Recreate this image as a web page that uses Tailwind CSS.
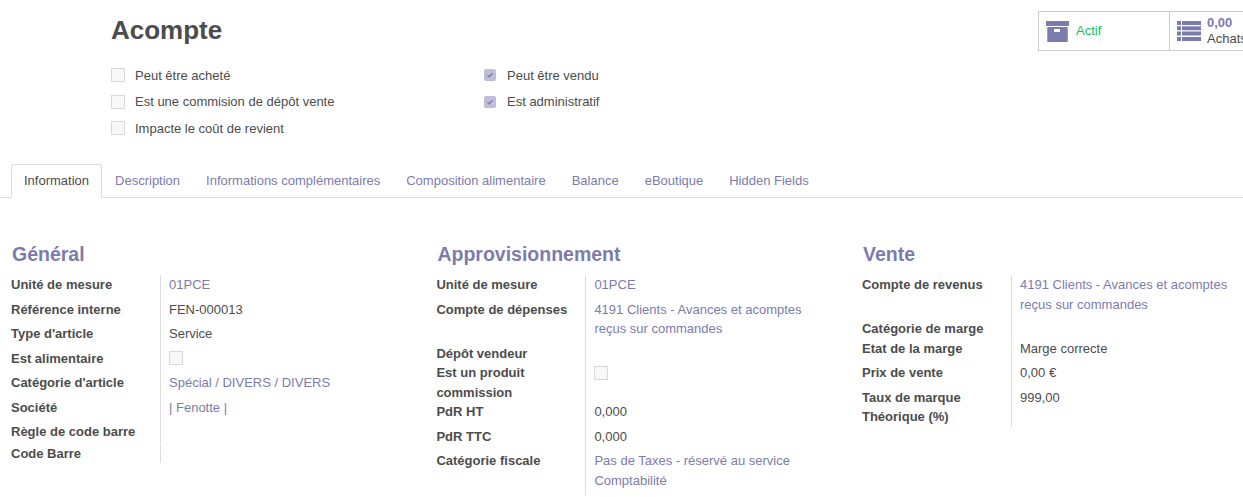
<!DOCTYPE html>
<html lang="fr">
  <head>
    <meta charset="UTF-8" />
    <title>Acompte</title>
    <script src="https://cdn.jsdelivr.net/npm/@tailwindcss/browser@4"></script>
  </head>
  <body class="bg-white h-[497px] w-[1243px] overflow-hidden font-['Liberation_Sans',Arial,sans-serif] text-[13px] leading-[19.5px] text-[#4c4c4c]">
    <!-- Header -->
    <div class="flex justify-between h-[164px]">
      <div class="pl-[111px] pt-[13px]">
        <h1 class="text-[26px] font-bold leading-[34px] text-[#4c4c4c]">Acompte</h1>
        <div class="flex mt-[15px]">
          <div class="w-[373px] flex flex-col">
            <div class="flex items-center h-[26.5px]">
              <span class="w-[14px] h-[14px] border border-[#d9d9d9] bg-[#f8f8f8] mr-[10px]"></span>
              <span>Peut être acheté</span>
            </div>
            <div class="flex items-center h-[26.5px]">
              <span class="w-[14px] h-[14px] border border-[#d9d9d9] bg-[#f8f8f8] mr-[10px]"></span>
              <span>Est une commision de dépôt vente</span>
            </div>
            <div class="flex items-center h-[26.5px]">
              <span class="w-[14px] h-[14px] border border-[#d9d9d9] bg-[#f8f8f8] mr-[10px]"></span>
              <span>Impacte le coût de revient</span>
            </div>
          </div>
          <div class="flex flex-col">
            <div class="flex items-center h-[26.5px]">
              <span class="w-[12px] h-[12px] rounded-[2px] bg-[#bfbdd9] mr-[11px] flex items-center justify-center">
                <svg width="8" height="8" viewBox="0 0 8 8"><path d="M1.5 4.2 3.2 5.8 6.5 2.2" fill="none" stroke="#7c7bad" stroke-width="1.3" /></svg>
              </span>
              <span>Peut être vendu</span>
            </div>
            <div class="flex items-center h-[26.5px]">
              <span class="w-[12px] h-[12px] rounded-[2px] bg-[#bfbdd9] mr-[11px] flex items-center justify-center">
                <svg width="8" height="8" viewBox="0 0 8 8"><path d="M1.5 4.2 3.2 5.8 6.5 2.2" fill="none" stroke="#7c7bad" stroke-width="1.3" /></svg>
              </span>
              <span>Est administratif</span>
            </div>
          </div>
        </div>
      </div>
      <div class="mt-[11px] h-[40px] w-[205px] border border-r-0 border-[#cccccc] flex overflow-hidden shrink-0">
        <div class="w-[131px] shrink-0 border-r border-[#cccccc] flex items-center pl-[7px]">
          <svg width="23" height="21" viewBox="0 0 23 21" class="mr-[7px] shrink-0">
            <path fill="#7c7bad" fill-rule="evenodd" d="M0 0h23v5H0zM1.300 6H21.700V21H1.300zM8 8v3h6V8z" />
          </svg>
          <span class="text-[#20bb5c]">Actif</span>
        </div>
        <div class="flex items-center pl-[7px] whitespace-nowrap">
          <svg width="24" height="20" viewBox="0 0 24 20" class="mr-[6px] shrink-0">
            <path fill="#7c7bad" d="M0 0h4v4H0zM5 0h19v4H5zM0 5.300h4v4H0zM5 5.300h19v4H5zM0 10.600h4v4H0zM5 10.600h19v4H5zM0 16h4v4H0zM5 16h19v4H5z" />
          </svg>
          <div class="leading-[16px]">
            <div class="font-bold text-[#7c7bad]">0,00</div>
            <div>Achats</div>
          </div>
        </div>
      </div>
    </div>

    <!-- Tabs -->
    <div class="flex h-[34px] pl-[11px] border-b border-[#dddddd]">
      <a class="h-[34px] px-[12px] pb-[2px] flex items-center border border-b-0 border-[#dddddd] rounded-t-[3px] bg-white">Information</a>
      <a class="h-[33px] px-[13px] flex items-center text-[#7c7bad]">Description</a>
      <a class="h-[33px] px-[13px] flex items-center text-[#7c7bad]">Informations complémentaires</a>
      <a class="h-[33px] px-[13px] flex items-center text-[#7c7bad]">Composition alimentaire</a>
      <a class="h-[33px] px-[13px] flex items-center text-[#7c7bad]">Balance</a>
      <a class="h-[33px] px-[13px] flex items-center text-[#7c7bad]">eBoutique</a>
      <a class="h-[33px] px-[13px] flex items-center text-[#7c7bad]">Hidden Fields</a>
    </div>

    <!-- Groups -->
    <div class="flex pl-[11px] pt-[42px]">
      <!-- Général -->
      <div class="w-[425.4px] shrink-0">
        <h2 class="text-[19.5px] font-bold leading-[28px] text-[#7c7bad] pl-[1px] mb-[7.2px]">Général</h2>
        <div class="flex"><div class="w-[149px] font-bold pb-[5px]">Unité de mesure</div><div class="w-[255px] border-l border-[#dddddd] pl-[8px] pb-[5px] text-[#7c7bad]">01PCE</div></div>
        <div class="flex"><div class="w-[149px] font-bold pb-[5px]">Référence interne</div><div class="w-[255px] border-l border-[#dddddd] pl-[8px] pb-[5px]">FEN-000013</div></div>
        <div class="flex"><div class="w-[149px] font-bold pb-[5px]">Type d'article</div><div class="w-[255px] border-l border-[#dddddd] pl-[8px] pb-[5px]">Service</div></div>
        <div class="flex"><div class="w-[149px] font-bold pb-[5px]">Est alimentaire</div><div class="w-[255px] border-l border-[#dddddd] pl-[8px] pb-[5px]"><span class="block w-[14px] h-[14px] mt-[2px] border border-[#d9d9d9] bg-[#f8f8f8]"></span></div></div>
        <div class="flex"><div class="w-[149px] font-bold pb-[5px]">Catégorie d'article</div><div class="w-[255px] border-l border-[#dddddd] pl-[8px] pb-[5px] text-[#7c7bad]">Spécial / DIVERS / DIVERS</div></div>
        <div class="flex"><div class="w-[149px] font-bold pb-[5px]">Société</div><div class="w-[255px] border-l border-[#dddddd] pl-[8px] pb-[5px] text-[#7c7bad]">| Fenotte |</div></div>
        <div class="flex"><div class="w-[149px] font-bold pb-[2px]">Règle de code barre</div><div class="w-[255px] border-l border-[#dddddd] pl-[8px] mb-[1px]"></div></div>
        <div class="flex"><div class="w-[149px] font-bold">Code Barre</div><div class="w-[255px] border-l border-[#dddddd] pl-[8px]"></div></div>
      </div>

      <!-- Approvisionnement -->
      <div class="w-[425.6px] shrink-0">
        <h2 class="text-[19.5px] font-bold leading-[28px] text-[#7c7bad] pl-[1px] mb-[7.2px]">Approvisionnement</h2>
        <div class="flex"><div class="w-[149px] font-bold pb-[5px]">Unité de mesure</div><div class="w-[232px] border-l border-[#dddddd] pl-[8px] pb-[5px] text-[#7c7bad]">01PCE</div></div>
        <div class="flex"><div class="w-[149px] font-bold pb-[5px]">Compte de dépenses</div><div class="w-[232px] border-l border-[#dddddd] pl-[8px] pb-[5px] text-[#7c7bad]">4191 Clients - Avances et acomptes reçus sur commandes</div></div>
        <div class="flex"><div class="w-[149px] font-bold">Dépôt vendeur</div><div class="w-[232px] border-l border-[#dddddd] pl-[8px]"></div></div>
        <div class="flex"><div class="w-[149px] font-bold">Est un produit commission</div><div class="w-[232px] border-l border-[#dddddd] pl-[8px]"><span class="block w-[14px] h-[14px] mt-[3px] border border-[#d9d9d9] bg-[#f8f8f8]"></span></div></div>
        <div class="flex"><div class="w-[149px] font-bold pb-[5px]">PdR HT</div><div class="w-[232px] border-l border-[#dddddd] pl-[8px] pb-[5px]">0,000</div></div>
        <div class="flex"><div class="w-[149px] font-bold pb-[5px]">PdR TTC</div><div class="w-[232px] border-l border-[#dddddd] pl-[8px] pb-[5px]">0,000</div></div>
        <div class="flex"><div class="w-[149px] font-bold pb-[5px]">Catégorie fiscale</div><div class="w-[232px] border-l border-[#dddddd] pl-[8px] pb-[5px] text-[#7c7bad]">Pas de Taxes - réservé au service Comptabilité</div></div>
      </div>

      <!-- Vente -->
      <div class="w-[381px] shrink-0">
        <h2 class="text-[19.5px] font-bold leading-[28px] text-[#7c7bad] pl-[1px] mb-[7.2px]">Vente</h2>
        <div class="flex"><div class="w-[149px] font-bold pb-[5px]">Compte de revenus</div><div class="w-[232px] border-l border-[#dddddd] pl-[8px] pb-[5px] text-[#7c7bad]">4191 Clients - Avances et acomptes reçus sur commandes</div></div>
        <div class="flex"><div class="w-[149px] font-bold">Catégorie de marge</div><div class="w-[232px] border-l border-[#dddddd] pl-[8px]"></div></div>
        <div class="flex"><div class="w-[149px] font-bold pb-[5px]">Etat de la marge</div><div class="w-[232px] border-l border-[#dddddd] pl-[8px] pb-[5px]">Marge correcte</div></div>
        <div class="flex"><div class="w-[149px] font-bold pb-[5px]">Prix de vente</div><div class="w-[232px] border-l border-[#dddddd] pl-[8px] pb-[5px]">0,00 €</div></div>
        <div class="flex"><div class="w-[149px] font-bold">Taux de marque Théorique (%)</div><div class="w-[232px] border-l border-[#dddddd] pl-[8px]">999,00</div></div>
      </div>
    </div>
  </body>
</html>
